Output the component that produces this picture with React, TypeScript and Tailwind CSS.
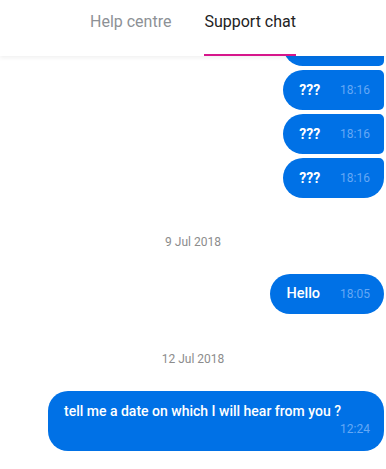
import React from "react";

type Msg = { text: string; time: string; shape: string; medium?: boolean };

const group: Msg[] = [
  { text: "???", time: "18:16", shape: "rounded-l-[20px] rounded-tr-[20px] rounded-br-[5px]" },
  { text: "???", time: "18:16", shape: "rounded-l-[20px] rounded-r-[5px]" },
  { text: "???", time: "18:16", shape: "rounded-l-[20px] rounded-r-[5px]" },
  { text: "???", time: "18:16", shape: "rounded-l-[20px] rounded-tr-[5px] rounded-br-[20px]" },
];

function Bubble({ text, time, shape, medium }: Msg) {
  return (
    <div className="flex justify-end pr-[2px]">
      <div className={`h-10 flex items-center bg-[#0071e6] pl-4 pr-[14px] ${shape}`}>
        <span className={medium ? "text-[14.5px] font-medium text-white" : "text-[14px] font-bold text-white"}>{text}</span>
        <span className="ml-[20px] text-[12px] text-[#64a8f5]">{time}</span>
      </div>
    </div>
  );
}

function DateLabel({ label }: { label: string }) {
  return <div className="text-center text-[12px] leading-4 text-[#8c8c8c]">{label}</div>;
}

export default function App() {
  return (
    <div className="w-[386px] h-[469px] overflow-hidden bg-white flex flex-col" style={{ fontFamily: "Roboto, 'Liberation Sans', sans-serif" }}>
      {/* Tabs */}
      <div className="relative z-10 h-14 shrink-0 bg-white shadow-[0_2px_4px_rgba(0,0,0,0.06)] flex justify-center gap-[33px]">
        <div className="pt-3 text-[16px] leading-5 text-[#8d9196]">Help centre</div>
        <div className="relative pt-3 text-[16px] leading-5 text-[#222]">
          Support chat
          <div className="absolute left-0 right-0 bottom-0 h-[2px] bg-[#d6168b]" />
        </div>
      </div>

      {/* Messages */}
      <div className="flex flex-col -mt-[30px]">
        <div className="flex flex-col gap-1">
          {group.map((m, i) => (
            <Bubble key={i} {...m} />
          ))}
        </div>

        <div className="mt-9">
          <DateLabel label="9 Jul 2018" />
        </div>
        <div className="mt-6">
          <Bubble text="Hello" time="18:05" shape="rounded-[20px]" medium />
        </div>

        <div className="mt-[37px]">
          <DateLabel label="12 Jul 2018" />
        </div>
        <div className="mt-6 flex justify-end pr-[2px]">
          <div className="w-[336px] rounded-[20px] bg-[#0071e6] pl-4 pr-[14px] pt-[10px] pb-[14px]">
            <div className="text-[14px] leading-5 font-medium text-white">tell me a date on which I will hear from you ?</div>
            <div className="text-right text-[12px] leading-4 text-[#64a8f5]">12:24</div>
          </div>
        </div>
      </div>
    </div>
  );
}
